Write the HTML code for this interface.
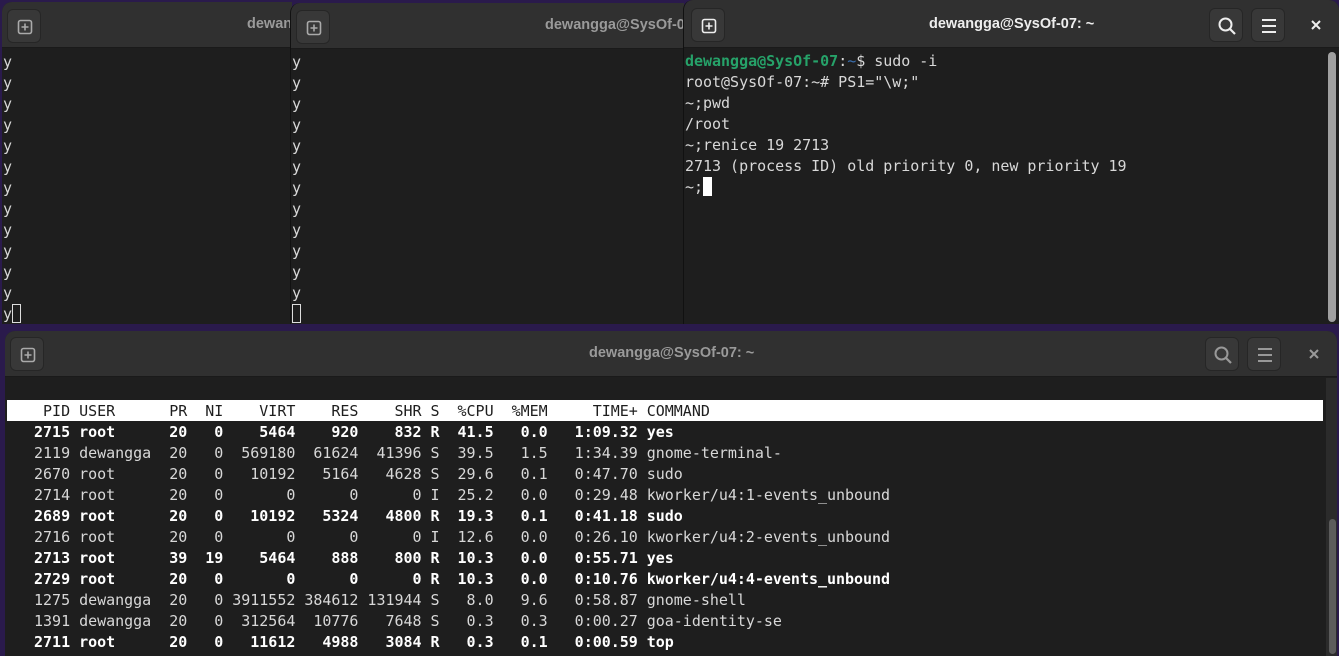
<!DOCTYPE html>
<html><head><meta charset="utf-8"><style>
*{margin:0;padding:0;box-sizing:border-box}
body{width:1339px;height:656px;overflow:hidden;background:#2a1a4c;position:relative;font-family:"Liberation Sans",sans-serif}
.win{position:absolute;background:#1e1e1e;overflow:hidden}
.hdr{position:absolute;left:0;right:0;top:0;height:46px;background:#303030;border-bottom:1px solid #1a1a1a}
.btn{position:absolute;width:34px;height:34px;border-radius:6px;background:#383838;border:1px solid #262626}
.title{position:absolute;top:15px;font-size:14.5px;font-weight:bold;color:#9a9a9a;white-space:nowrap}
pre{position:absolute;font-family:"DejaVu Sans Mono","Liberation Mono",monospace;font-size:15px;letter-spacing:-0.02px;line-height:21px;color:#d8d8d8;white-space:pre}
b{font-weight:bold;color:#fff}
.cur{display:inline-block;width:9px;height:19px;vertical-align:-4px;border:1px solid #ddd}
</style></head><body>
<div class="win" style="left:2px;top:2px;width:290px;height:322px;border-radius:10px 0 0 0">
 <div class="hdr"></div>
 <div class="btn" style="left:5px;top:7px"><svg width="34" height="34"><rect x="10.5" y="10.5" width="13" height="13" rx="2" fill="none" stroke="#aaa" stroke-width="1.6"/><path d="M17 13.5v7M13.5 17h7" stroke="#aaa" stroke-width="1.6"/></svg></div>
 <div class="title" style="left:245px;top:14px">dewangga@SysOf-07: ~</div>
 <pre style="left:1px;top:50px">y
y
y
y
y
y
y
y
y
y
y
y
y<span class="cur"></span></pre>
</div>
<div class="win" style="left:290px;top:3px;width:394px;height:321px;border-radius:10px 0 0 0;border-left:1px solid #111">
 <div class="hdr"></div>
 <div class="btn" style="left:5px;top:7px"><svg width="34" height="34"><rect x="10.5" y="10.5" width="13" height="13" rx="2" fill="none" stroke="#aaa" stroke-width="1.6"/><path d="M17 13.5v7M13.5 17h7" stroke="#aaa" stroke-width="1.6"/></svg></div>
 <div class="title" style="left:254px;top:14px">dewangga@SysOf-07: ~</div>
 <pre style="left:1px;top:49px">y
y
y
y
y
y
y
y
y
y
y
y
<span class="cur"></span></pre>
</div>
<div class="win" style="left:683px;top:0;width:656px;height:324px;border-radius:10px 10px 0 0;border-left:1px solid #111">
 <div class="hdr" style="height:48px"></div>
 <div class="btn" style="left:7px;top:8px"><svg width="34" height="34"><rect x="10.5" y="10.5" width="13" height="13" rx="2" fill="none" stroke="#eee" stroke-width="1.6"/><path d="M17 13.5v7M13.5 17h7" stroke="#eee" stroke-width="1.6"/></svg></div>
 <div class="title" style="left:245px;top:16px;color:#eee">dewangga@SysOf-07: ~</div>
 <div class="btn" style="left:525px;top:8px"><svg width="34" height="34"><circle cx="15.5" cy="15.5" r="6" fill="none" stroke="#eee" stroke-width="2"/><path d="M20 20l5 5" stroke="#eee" stroke-width="2.2"/></svg></div>
 <div class="btn" style="left:567px;top:8px"><svg width="34" height="34"><path d="M10 11h14M10 17h14M10 23h14" stroke="#eee" stroke-width="2"/></svg></div>
 <svg style="position:absolute;left:625px;top:18px" width="14" height="14"><path d="M3 3l8 8M11 3l-8 8" stroke="#eee" stroke-width="2"/></svg>
 <div style="position:absolute;left:644px;top:52px;width:8px;height:270px;border-radius:4px;background:#a0a0a0"></div>
 <pre style="left:1px;top:51px"><span style="color:#26a269;font-weight:bold">dewangga@SysOf-07</span>:<span style="color:#3a6fb0">~</span>$ sudo -i
root@SysOf-07:~# PS1="\w;"
~;pwd
/root
~;renice 19 2713
2713 (process ID) old priority 0, new priority 19
~;<span class="cur" style="background:#fff;border:none"></span></pre>
</div>
<div class="win" style="left:5px;top:331px;width:1332px;height:325px;border-radius:10px 10px 0 0">
 <div class="hdr"></div>
 <div class="btn" style="left:5px;top:6px"><svg width="34" height="34"><rect x="10.5" y="10.5" width="13" height="13" rx="2" fill="none" stroke="#aaa" stroke-width="1.6"/><path d="M17 13.5v7M13.5 17h7" stroke="#aaa" stroke-width="1.6"/></svg></div>
 <div class="title" style="left:584px;top:14px">dewangga@SysOf-07: ~</div>
 <div class="btn" style="left:1200px;top:6px"><svg width="34" height="34"><circle cx="15.5" cy="15.5" r="6" fill="none" stroke="#999" stroke-width="2"/><path d="M20 20l5 5" stroke="#999" stroke-width="2.2"/></svg></div>
 <div class="btn" style="left:1242px;top:6px"><svg width="34" height="34"><path d="M10 11h14M10 17h14M10 23h14" stroke="#999" stroke-width="2"/></svg></div>
 <svg style="position:absolute;left:1302px;top:16px" width="14" height="14"><path d="M3 3l8 8M11 3l-8 8" stroke="#999" stroke-width="2"/></svg>
 <div style="position:absolute;left:1321px;top:47px;width:11px;height:278px;background:#2b2b2b"></div>
 <div style="position:absolute;left:1324px;top:188px;width:7px;height:135px;border-radius:4px;background:#5c5c5c"></div>
 <div style="position:absolute;left:2px;top:69px;width:1316px;height:21px;background:#fff"></div>
 <pre style="left:2px;top:70px"><span style="color:#1e1e1e">    PID USER      PR  NI    VIRT    RES    SHR S  %CPU  %MEM     TIME+ COMMAND</span>
<b>   2715 root      20   0    5464    920    832 R  41.5   0.0   1:09.32 yes</b>
   2119 dewangga  20   0  569180  61624  41396 S  39.5   1.5   1:34.39 gnome-terminal-
   2670 root      20   0   10192   5164   4628 S  29.6   0.1   0:47.70 sudo
   2714 root      20   0       0      0      0 I  25.2   0.0   0:29.48 kworker/u4:1-events_unbound
<b>   2689 root      20   0   10192   5324   4800 R  19.3   0.1   0:41.18 sudo</b>
   2716 root      20   0       0      0      0 I  12.6   0.0   0:26.10 kworker/u4:2-events_unbound
<b>   2713 root      39  19    5464    888    800 R  10.3   0.0   0:55.71 yes</b>
<b>   2729 root      20   0       0      0      0 R  10.3   0.0   0:10.76 kworker/u4:4-events_unbound</b>
   1275 dewangga  20   0 3911552 384612 131944 S   8.0   9.6   0:58.87 gnome-shell
   1391 dewangga  20   0  312564  10776   7648 S   0.3   0.3   0:00.27 goa-identity-se
<b>   2711 root      20   0   11612   4988   3084 R   0.3   0.1   0:00.59 top</b></pre>
</div>
</body></html>
